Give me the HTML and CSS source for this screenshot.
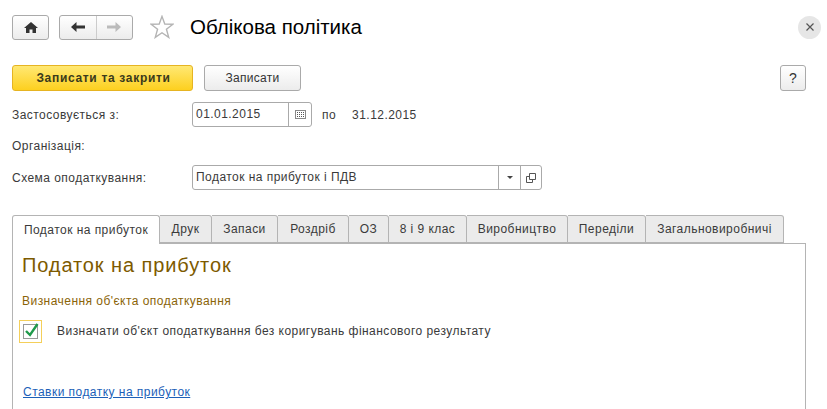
FILE: index.html
```html
<!DOCTYPE html>
<html lang="uk">
<head>
<meta charset="utf-8">
<title>Облікова політика</title>
<link rel="stylesheet" href="styles.css">
</head>
<body>
<div class="page">
  <header class="head">
    <button class="btn nav-home"><svg width="14" height="11" viewBox="0 0 14 11"><path d="M7 0 L14 6 H12 V11 H8.500 V7.500 H5.500 V11 H2 V6 H0 Z" fill="#333"/></svg></button>
    <div class="btn nav-group">
      <span class="nav-cell"><svg width="14" height="10" viewBox="0 0 14 10"><path d="M0 5 L5.500 0 V3.500 H14 V6.500 H5.500 V10 Z" fill="#333"/></svg></span>
      <span class="nav-cell nav-next"><svg width="14" height="10" viewBox="0 0 14 10"><path d="M14 5 L8.500 0 V3.500 H0 V6.500 H8.500 V10 Z" fill="#bbb"/></svg></span>
    </div>
    <svg class="star" width="24" height="24" viewBox="0 0 26 26"><path d="M13 1.500 L16 9.800 L24.800 10 L17.800 15.500 L20.300 24.300 L13 19.200 L5.700 24.300 L8.200 15.500 L1.200 10 L10 9.800 Z" fill="#fff" stroke="#b4b4b4" stroke-width="1.500"/></svg>
    <h1 class="title">Облікова політика</h1>
    <button class="close"><svg width="8" height="8" viewBox="0 0 8 8"><path d="M.5 .5 L7.500 7.500 M7.500 .5 L.5 7.500" stroke="#555" stroke-width="1.200"/></svg></button>
  </header>

  <div class="actions">
    <button class="btn primary">Записати та закрити</button>
    <button class="btn secondary">Записати</button>
    <button class="btn help">?</button>
  </div>

  <div class="row row-date">
    <span class="label">Застосовується з:</span>
    <div class="field date-field">
      <span class="value">01.01.2015</span>
      <span class="cell cell-cal"><svg width="11" height="9" viewBox="0 0 11 9"><rect x=".5" y=".5" width="10" height="8" fill="#fff" stroke="#888"/><path d="M2 2.500h7M2 4.500h7M2 6.500h7" stroke="#555" stroke-dasharray="1 1"/></svg></span>
    </div>
    <span class="by">по</span>
    <span class="to-date">31.12.2015</span>
  </div>

  <div class="row row-org"><span class="label">Організація:</span></div>

  <div class="row row-scheme">
    <span class="label">Схема оподаткування:</span>
    <div class="field scheme-field">
      <span class="value">Податок на прибуток і ПДВ</span>
      <span class="cell cell-drop"><svg width="6" height="3" viewBox="0 0 6 3"><path d="M0 0h6L3 3z" fill="#444"/></svg></span>
      <span class="cell cell-open"><svg width="10" height="10" viewBox="0 0 10 10"><path d="M3.500 .5h6v6h-6zM3.500 3.500H.5v6h6V6.500" fill="none" stroke="#555"/></svg></span>
    </div>
  </div>

  <nav class="tabs">
    <span class="tab active t1">Податок на прибуток</span>
    <span class="tab t2">Друк</span>
    <span class="tab t3">Запаси</span>
    <span class="tab t4">Роздріб</span>
    <span class="tab t5">ОЗ</span>
    <span class="tab t6">8 і 9 клас</span>
    <span class="tab t7">Виробництво</span>
    <span class="tab t8">Переділи</span>
    <span class="tab t9">Загальновиробничі</span>
  </nav>

  <section class="panel">
    <h2 class="panel-title">Податок на прибуток</h2>
    <h3 class="group-title">Визначення об'єкта оподаткування</h3>
    <div class="check-row">
      <span class="check-focus"><span class="check"><svg class="tick" width="15" height="15" viewBox="0 0 15 15"><path d="M2 8 L6 12 L13.500 1" fill="none" stroke="#1f9a4b" stroke-width="2.400"/></svg></span></span>
      <span class="check-label">Визначати об'єкт оподаткування без коригувань фінансового результату</span>
    </div>
    <a class="link" href="#">Ставки податку на прибуток</a>
  </section>
</div>
</body>
</html>
```
FILE: styles.css
```css
* { box-sizing: border-box; }
html, body { margin: 0; padding: 0; background: #fff; overflow: hidden; }
body { font-family: "Liberation Sans", Arial, sans-serif; font-size: 12px; letter-spacing: .46px; color: #3a3a3a; }
.page { width: 827px; height: 409px; padding: 0 21px 0 12px; overflow: hidden; }

.btn {
  display: flex; align-items: center; justify-content: center;
  border: 1px solid #aaa; border-radius: 3px;
  background: linear-gradient(#fff, #ececec);
  font: 12px "Liberation Sans", Arial, sans-serif; letter-spacing: .3px; color: #333; padding: 0;
}

.head { display: flex; align-items: center; height: 54px; }
.nav-home { width: 37px; height: 25px; }
.nav-group { width: 74px; height: 25px; margin-left: 10px; }
.nav-cell { flex: 1; height: 100%; display: flex; align-items: center; justify-content: center; }
.nav-next { border-left: 1px solid #ccc; }
.star { margin-left: 17px; margin-bottom: 1px; }
.title { font-size: 20.5px; letter-spacing: 0; font-weight: 400; color: #000; margin: 0 0 0 16px; flex: 1; }
.close {
  width: 23px; height: 23px; border-radius: 50%; border: 0; background: #e6e6e6;
  display: flex; align-items: center; justify-content: center; padding: 0; margin-right: -15px;
}

.actions { display: flex; height: 26px; margin-top: 11px; }
.primary {
  width: 181px; border-color: #e6b422; background: linear-gradient(#ffe873, #fdd01f);
  font-weight: 700; letter-spacing: .68px; color: #3a3a1c; padding-left: 2px;
}
.secondary { width: 97px; margin-left: 11px; }
.help { width: 26px; margin-left: auto; font-size: 14px; }

.row { display: flex; align-items: center; }
.label { width: 180px; flex: none; }
.row-date { height: 25px; margin-top: 11px; }
.row-org { height: 18px; margin-top: 10px; }
.row-scheme { height: 25px; margin-top: 10px; }

.field {
  display: flex; height: 25px; border: 1px solid #aaa; border-radius: 3px; background: #fff; align-items: stretch;
}
.value { flex: 1; padding-left: 3px; line-height: 23px; }
.cell { display: flex; align-items: center; justify-content: center; border-left: 1px solid #aaa; }
.date-field { width: 120px; }
.cell-cal { width: 23px; }
.by { margin-left: 10px; }
.to-date { margin-left: 16px; }
.scheme-field { width: 350px; }
.cell-drop { width: 22px; }
.cell-open { width: 21px; }

.tabs { display: flex; margin-top: 25px; height: 29px; position: relative; z-index: 1; }
.tab {
  display: flex; align-items: center; justify-content: center;
  height: 28px; border: 1px solid #b4b4b4; border-left-width: 0; border-radius: 0 3px 0 0;
  background: #ebebeb;
}
.tab.active { background: #fff; border-left-width: 1px; border-bottom: 0; height: 29px; border-radius: 3px 3px 0 0; }
.t1 { width: 148px; }
.t2 { width: 52px; }
.t3 { width: 66px; }
.t4 { width: 71px; }
.t5 { width: 40px; }
.t6 { width: 78px; }
.t7 { width: 101px; }
.t8 { width: 78px; }
.t9 { width: 138px; }

.panel {
  border: 1px solid #b4b4b4; border-bottom: 0; margin-top: -1px; height: 170px; padding: 0 9px;
}
.panel-title { font-size: 20px; font-weight: 400; color: #7d5a00; letter-spacing: .9px; margin: 9px 0 0; line-height: 24px; }
.group-title { font-size: 12px; font-weight: 400; color: #8a6408; margin: 17px 0 0; line-height: 15px; }
.check-row { display: flex; align-items: center; margin: 10px 0 0 -3px; height: 24px; }
.check-focus { width: 23px; height: 23px; border: 1px solid #f4cf5a; padding: 3px; display: block; flex: none; }
.check { display: block; width: 15px; height: 15px; border: 1px solid #999; position: relative; }
.tick { position: absolute; left: 0; top: -2px; }
.check-label { margin-left: 15px; }
.link { display: block; margin: 42px 0 0 1px; color: #1c5fb8; line-height: 14px; }
```
